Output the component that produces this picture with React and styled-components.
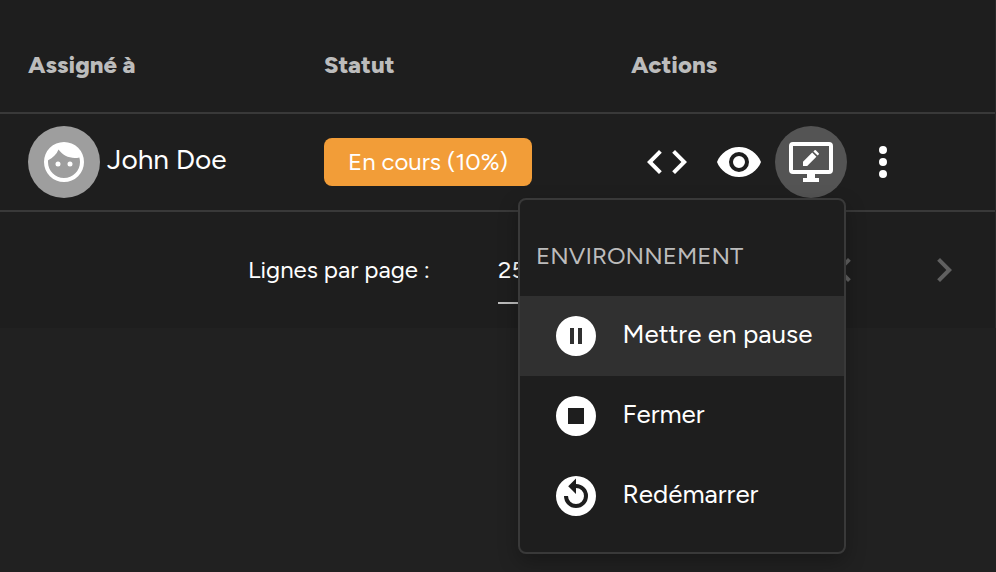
import React from 'react';
import styled, { createGlobalStyle } from 'styled-components';

const GlobalStyle = createGlobalStyle`
  * { box-sizing: border-box; }
  body { margin: 0; background: #212121; overflow: hidden; }
`;

const Page = styled.main`
  position: relative;
  width: 996px;
  height: 572px;
  overflow: hidden;
  background: #212121;
  color: #fff;
  font-family: Figtree, Lato, 'Open Sans', sans-serif;
  font-size: 24px;
`;

const Table = styled.section`
  height: 328px;
  background: #1e1e1e;
  border-right: 1px solid #292929;
`;

const Row = styled.div`
  display: grid;
  grid-template-columns: 296px 307px 1fr;
  align-items: center;
  height: ${(p) => p.$height}px;
  padding: ${(p) => p.$top || 0}px 0 0 28px;
  border-bottom: 2px solid #393939;
`;

const Label = styled.span`
  justify-self: start;
  white-space: nowrap;
  line-height: 32px;
  font-size: ${(p) => p.$size || 24}px;
  font-weight: ${(p) => p.$weight || 400};
  color: ${(p) => p.$color || '#fff'};
`;

const Person = styled.div`
  display: flex;
  align-items: center;
  gap: 7px;
  ${Label} { margin-bottom: 6px; }
`;

const Circle = styled.span`
  display: flex;
  flex: none;
  align-items: center;
  justify-content: center;
  width: 72px;
  height: 72px;
  border-radius: 50%;
  background: ${(p) => p.$fill || 'transparent'};
`;

const Chip = styled.span`
  display: flex;
  align-items: center;
  justify-content: center;
  width: 208px;
  height: 48px;
  border-radius: 8px;
  background: #f29d38;
`;

const Actions = styled.div`
  display: flex;
`;

const Footer = styled.footer`
  display: flex;
  height: 116px;
  align-items: center;
  padding-left: 248px;
`;

const PageSize = styled.div`
  width: 90px;
  height: 50px;
  margin: 18px 0 0 auto;
  border-bottom: 2px solid #bcbcbc;
`;

const Pager = styled.div`
  display: flex;
  gap: 52px;
  margin: 0 27px 0 232px;
`;

const Menu = styled.aside`
  position: absolute;
  left: 518px;
  top: 198px;
  width: 328px;
  height: 356px;
  border: 2px solid #393939;
  border-radius: 8px;
  background: #1e1e1e;
  box-shadow: 0 8px 20px rgba(0, 0, 0, 0.28);
`;

const MenuTitle = styled.div`
  height: 96px;
  padding: 40px 0 0 16px;
`;

const MenuItem = styled.div`
  display: flex;
  align-items: center;
  height: 80px;
  padding-left: 32px;
  gap: 22.5px;
  background: ${(p) => (p.$active ? '#303030' : 'transparent')};
  ${Label} { margin-bottom: 4px; }
`;

const Svg = styled.svg`
  display: block;
  flex: none;
  width: 48px;
  height: 48px;
  fill: ${(p) => p.$color || '#fff'};
`;

const disc = 'M12 2a10 10 0 1 0 0 20a10 10 0 1 0 0-20Z';

const paths = {
  face: 'M9,11.75A1.25,1.25 0 0,0 7.75,13A1.25,1.25 0 0,0 9,14.25A1.25,1.25 0 0,0 10.25,13A1.25,1.25 0 0,0 9,11.75M15,11.75A1.25,1.25 0 0,0 13.75,13A1.25,1.25 0 0,0 15,14.25A1.25,1.25 0 0,0 16.25,13A1.25,1.25 0 0,0 15,11.75M12,2A10,10 0 0,0 2,12A10,10 0 0,0 12,22A10,10 0 0,0 22,12A10,10 0 0,0 12,2M12,20C7.59,20 4,16.41 4,12C4,11.71 4,11.42 4.05,11.14C6.41,10.09 8.28,8.16 9.26,5.77C11.07,8.33 14.05,10 17.42,10C18.2,10 18.95,9.91 19.67,9.74C19.88,10.45 20,11.21 20,12C20,16.41 16.41,20 12,20Z',
  code: 'M14.6,16.6L19.2,12L14.6,7.4L16,6L22,12L16,18L14.6,16.6M9.4,16.6L4.8,12L9.4,7.4L8,6L2,12L8,18L9.4,16.6Z',
  eye: 'M12,9A3,3 0 0,0 9,12A3,3 0 0,0 12,15A3,3 0 0,0 15,12A3,3 0 0,0 12,9M12,17A5,5 0 0,1 7,12A5,5 0 0,1 12,7A5,5 0 0,1 17,12A5,5 0 0,1 12,17M12,4.5C7,4.5 2.73,7.61 1,12C2.73,16.39 7,19.5 12,19.5C17,19.5 21.27,16.39 23,12C21.27,7.61 17,4.5 12,4.5Z',
  monitor: 'M21,16V4H3V16H21M21,2A2,2 0 0,1 23,4V16A2,2 0 0,1 21,18H14V20H16V22H8V20H10V18H3A2,2 0 0,1 1,16V4A2,2 0 0,1 3,2ZM8,11.9L12.6,7.3L14.7,9.4L10.1,14H8ZM13.2,6.7L13.8,6.15Q14.1,5.85 14.4,6.15L15.85,7.6Q16.15,7.9 15.85,8.2L15.3,8.8Z',
  dots: 'M12,16A2,2 0 1,1 12,20A2,2 0 1,1 12,16M12,10A2,2 0 1,1 12,14A2,2 0 1,1 12,10M12,4A2,2 0 1,1 12,8A2,2 0 1,1 12,4',
  left: 'M15.41,16.58L10.83,12L15.41,7.41L14,6L8,12L14,18L15.41,16.58Z',
  right: 'M8.59,16.58L13.17,12L8.59,7.41L10,6L16,12L10,18L8.59,16.58Z',
  pause: disc + 'M9 8H11V16H9ZM13 8H15V16H13Z',
  stop: disc + 'M8 8H16V16H8Z',
  restart: disc + 'M12 3.2L8.1 7.1L12 11V8A4 4 0 1 1 8 12H6A6 6 0 1 0 12 6Z',
};

const Icon = ({ name, color }) => (
  <Svg viewBox="0 0 24 24" $color={color} aria-hidden="true">
    <path d={paths[name]} fillRule="evenodd" />
  </Svg>
);

const items = [
  { icon: 'pause', text: 'Mettre en pause', active: true },
  { icon: 'stop', text: 'Fermer' },
  { icon: 'restart', text: 'Redémarrer' },
];

export default function App() {
  return (
    <Page>
      <GlobalStyle />
      <Table>
        <Row $height={114} $top={18}>
          <Label $weight={800} $color="#bcbcbc">Assigné à</Label>
          <Label $weight={800} $color="#bcbcbc">Statut</Label>
          <Label $weight={800} $color="#bcbcbc">Actions</Label>
        </Row>
        <Row $height={98}>
          <Person>
            <Circle $fill="#9e9e9e"><Icon name="face" /></Circle>
            <Label $size={28}>John Doe</Label>
          </Person>
          <Chip><Label>En cours (10%)</Label></Chip>
          <Actions>
            <Circle><Icon name="code" /></Circle>
            <Circle><Icon name="eye" /></Circle>
            <Circle $fill="#545454"><Icon name="monitor" /></Circle>
            <Circle><Icon name="dots" /></Circle>
          </Actions>
        </Row>
        <Footer>
          <Label>Lignes par page :</Label>
          <PageSize><Label>25</Label></PageSize>
          <Pager>
            <Icon name="left" color="#606060" />
            <Icon name="right" color="#606060" />
          </Pager>
        </Footer>
      </Table>
      <Menu>
        <MenuTitle><Label $color="#bcbcbc">ENVIRONNEMENT</Label></MenuTitle>
        {items.map((item) => (
          <MenuItem key={item.icon} $active={item.active}>
            <Icon name={item.icon} />
            <Label $size={26}>{item.text}</Label>
          </MenuItem>
        ))}
      </Menu>
    </Page>
  );
}
